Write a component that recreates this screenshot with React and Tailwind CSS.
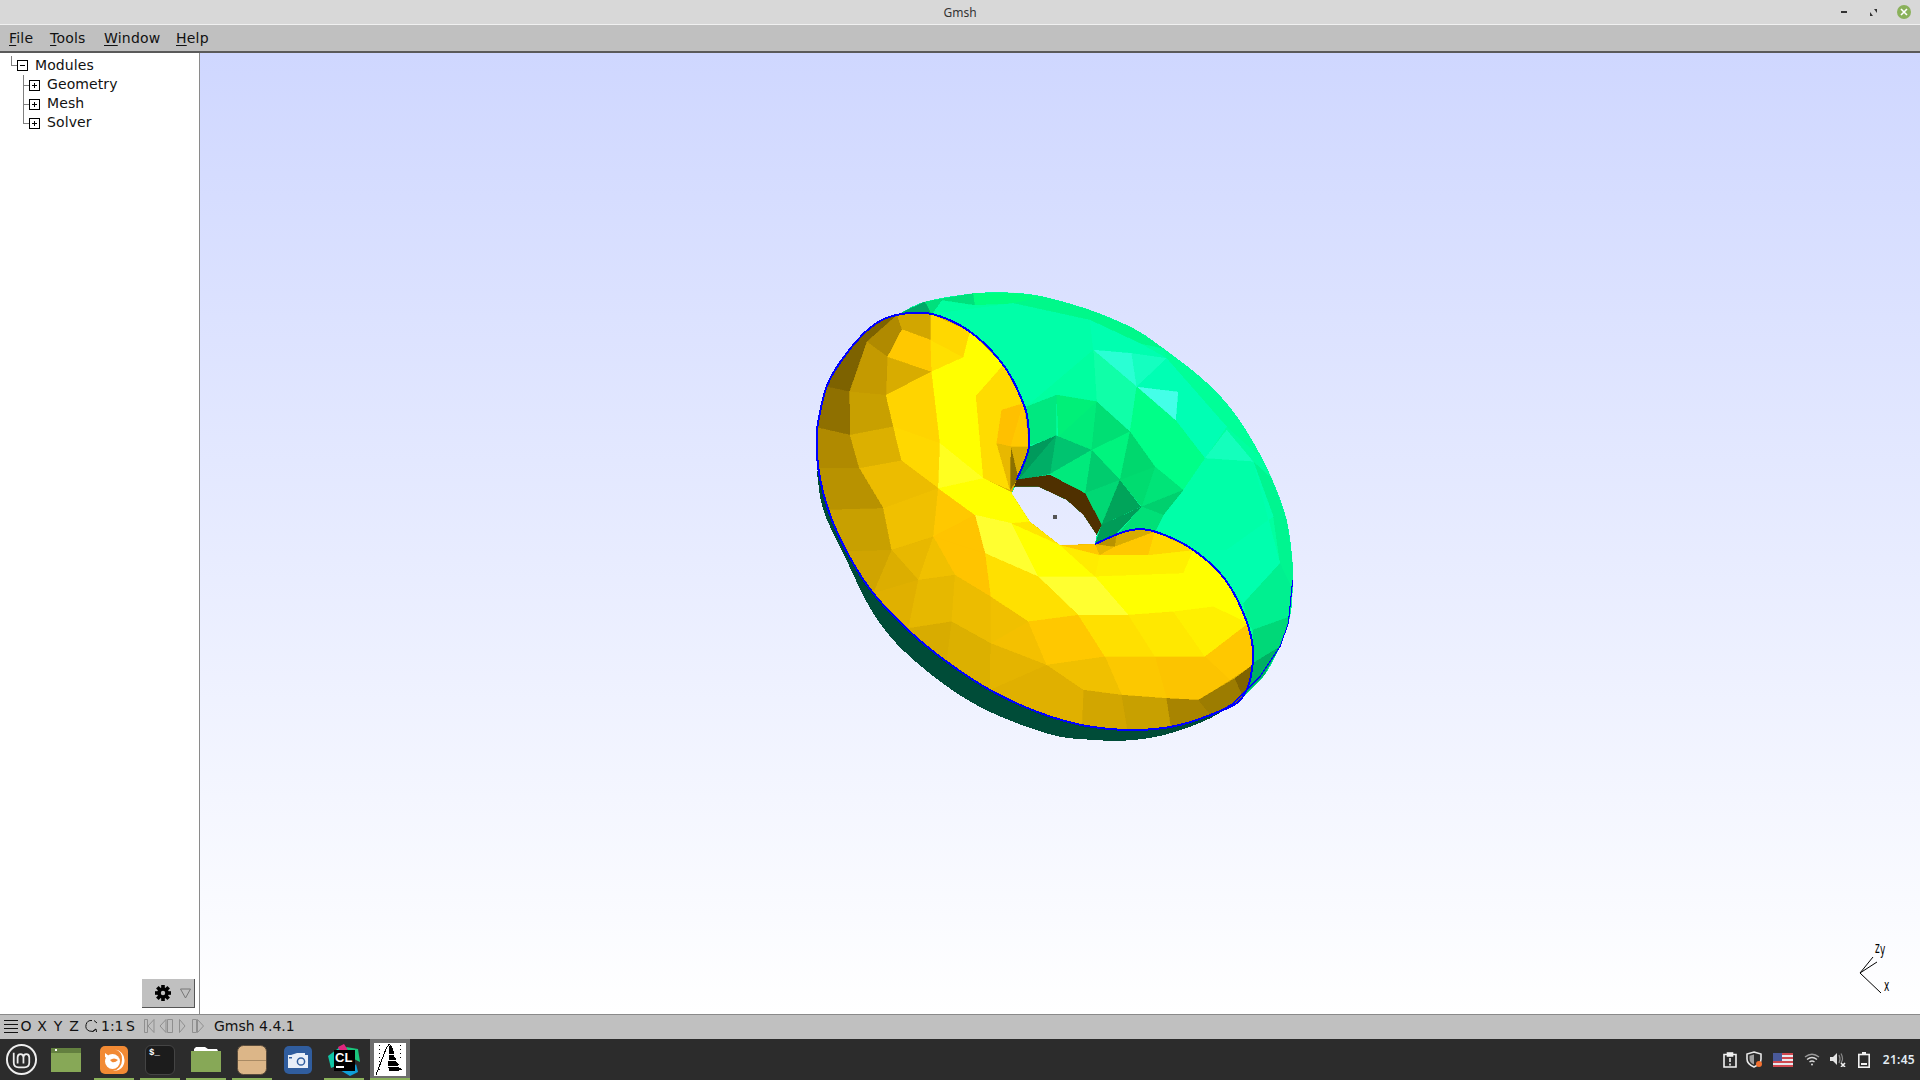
const greenFacets = [
  ['#00a868', '300,130 375,95 425,90 395,132'],
  ['#00e07c', '375,95 520,70 525,105 425,90 395,132'],
  ['#00ff80', '520,70 635,68 730,80 640,100 525,105'],
  ['#00f88a', '730,80 870,120 1000,175 1090,235 1020,220 870,150 640,100'],
  ['#00ff98', '1090,235 1200,320 1280,400 1350,500 1415,625 1380,560 1280,470 1100,265'],
  ['#00f590', '1415,625 1460,750 1478,880 1478,960 1440,880 1420,740 1360,575'],
  ['#00ffa8', '395,132 640,100 870,150 880,240 680,410 610,285 510,185'],
  ['#00ffb0', '870,150 1020,220 1100,265 995,250 880,240'],
  ['#2affd4', '880,240 995,250 1010,350'],
  ['#14ffc0', '995,250 1100,265 1010,350'],
  ['#44ffe8', '1010,350 1135,365 1128,452'],
  ['#00ffb4', '1100,265 1280,470 1215,565 1128,452 1135,365 1010,350'],
  ['#10ffa8', '880,240 1010,350 990,485 890,395'],
  ['#00ffa0', '680,410 880,240 890,395 770,375'],
  ['#00ff88', '1010,350 1128,452 1215,565 1150,660 1065,590 990,485'],
  ['#14ffbc', '1215,565 1280,480 1360,575'],
  ['#00ffa8', '1215,565 1360,575 1420,740 1280,840 1180,840 1065,785 1090,735 1150,660'],
  ['#00ffae', '1360,575 1440,880 1330,1000 1280,935 1180,840 1280,840 1420,740'],
  ['#00f090', '1440,880 1478,960 1470,1040 1358,1080 1345,1060 1330,1000'],
  ['#00d878', '1470,1040 1440,1130 1360,1180 1358,1080'],
  ['#00b064', '1440,1130 1390,1220 1325,1285 1358,1180'],
  ['#00e880', '680,410 770,375 768,497 692,525'],
  ['#00f078', '770,375 890,395 775,500'],
  ['#00ec7a', '890,395 875,540 775,500'],
  ['#00df74', '890,395 990,485 875,540'],
  ['#00f47e', '990,485 875,540 960,630'],
  ['#00d86e', '990,485 1065,590 960,630'],
  ['#00c470', '768,497 875,540 750,612'],
  ['#009a5c', '690,530 768,497 655,630'],
  ['#00ae66', '768,497 750,612 655,630'],
  ['#00cc6e', '875,540 960,630 855,670'],
  ['#00ea7c', '875,540 855,670 750,612'],
  ['#00d874', '960,630 855,670 905,765'],
  ['#00a45a', '960,630 1022,710 905,765'],
  ['#00e478', '1065,590 1150,660 1025,710'],
  ['#00dc70', '1065,590 1025,710 960,630'],
  ['#00d06e', '1150,660 1090,735 1025,710'],
  ['#00e078', '1025,710 1090,735 1065,785 960,785'],
  ['#009c58', '905,765 1025,710 950,790 885,822'],
  ['#4f3000', '645,630 750,615 855,670 905,765 890,795 850,735 800,690 715,650 640,650'],
]

const yellowFacets = [
  ['#d2a600', '290,135 395,132 392,210 305,178'],
  ['#ffc800', '305,178 392,210 395,305 262,260'],
  ['#b08a00', '290,135 305,178 262,260 200,215'],
  ['#c49a00', '200,215 262,260 258,375 148,365'],
  ['#7d6200', '200,215 148,365 80,350 120,240 215,150 290,135'],
  ['#c8a000', '148,365 258,375 280,470 150,495'],
  ['#8f7000', '80,350 148,365 150,495 40,470'],
  ['#b08a00', '40,470 150,495 178,595 45,595'],
  ['#dcb000', '150,495 280,470 305,572 178,595'],
  ['#ffd400', '258,375 395,305 420,520 280,470'],
  ['#ffe000', '395,305 392,210 490,262'],
  ['#ffd800', '392,132 510,185 490,262 392,210'],
  ['#ffff00', '510,185 610,285 528,378 490,262'],
  ['#ffff00', '395,305 490,262 528,378 550,625 420,520'],
  ['#ffd800', '280,470 420,520 415,655 305,572'],
  ['#ffff20', '420,520 550,625 415,655'],
  ['#ecbc00', '305,572 415,655 250,715 178,595'],
  ['#b89200', '45,595 178,595 250,715 75,720'],
  ['#c8a000', '75,720 250,715 275,840 130,845'],
  ['#f0c000', '250,715 415,655 400,800 275,840'],
  ['#ffc800', '415,655 525,735 400,800'],
  ['#ffdc00', '528,378 610,285 670,400 605,420 590,520 630,660 550,625'],
  ['#ffc000', '605,420 670,400 635,530 590,520'],
  ['#ffc800', '670,400 688,530 632,530'],
  ['#d8ac00', '632,530 688,530 655,630'],
  ['#8c7000', '632,530 655,625 630,660'],
  ['#e8b800', '590,520 632,530 630,660'],
  ['#ffff00', '550,625 640,670 690,755 635,760 525,735 415,655'],
  ['#ffff30', '525,735 635,760 555,850'],
  ['#ffc400', '525,735 555,850 400,800'],
  ['#ffff30', '635,760 715,920 555,850'],
  ['#ffff00', '635,760 780,825 885,920 715,920'],
  ['#ffe600', '690,755 780,825 635,760'],
  ['#ffec00', '780,825 900,855 885,920'],
  ['#ffc800', '780,825 885,822 900,855'],
  ['#e8b800', '885,822 945,830 900,855'],
  ['#b89200', '885,822 950,790 945,830'],
  ['#d8ac00', '950,790 1065,785 945,830'],
  ['#ffc800', '945,830 1065,785 1045,855 900,855'],
  ['#fff000', '900,855 1045,855 1180,840 1150,910 885,920'],
  ['#ffd800', '1065,785 1180,840 1045,855'],
  ['#ffff00', '885,920 1150,910 1240,1010 1120,1025 985,1035'],
  ['#ffff30', '715,920 885,920 985,1035 835,1035'],
  ['#ffff00', '1180,840 1290,925 1345,1060 1240,1010 1150,910'],
  ['#ffe000', '555,850 715,920 572,980'],
  ['#ffe000', '715,920 835,1035 685,1055 572,980'],
  ['#ffc400', '400,800 555,850 572,980 465,915'],
  ['#e8b800', '275,840 400,800 355,930'],
  ['#f0c000', '400,800 465,915 355,930'],
  ['#d0a400', '130,845 275,840 220,970'],
  ['#dcae00', '275,840 355,930 220,970'],
  ['#e0b000', '220,970 355,930 325,1075'],
  ['#e6b800', '355,930 465,915 455,1055 325,1075'],
  ['#ecbc00', '465,915 572,980 572,1120 455,1055'],
  ['#f0c000', '572,980 685,1055 572,1120'],
  ['#d8ac00', '325,1075 455,1055 440,1175'],
  ['#dcb000', '455,1055 572,1120 570,1260 440,1175'],
  ['#f4c000', '572,1120 685,1055 740,1185'],
  ['#e4b400', '572,1120 740,1185 570,1260'],
  ['#ffc800', '685,1055 835,1035 915,1160 740,1185'],
  ['#ffe000', '835,1035 985,1035 1065,1160 915,1160'],
  ['#ffe800', '985,1035 1120,1025 1215,1160 1065,1160'],
  ['#fff000', '1120,1025 1240,1010 1345,1060 1215,1160'],
  ['#ffc800', '1215,1160 1345,1060 1365,1180 1290,1230'],
  ['#fcc400', '1065,1160 1215,1160 1290,1230 1195,1290 1100,1285'],
  ['#fcc800', '915,1160 1065,1160 1100,1285 965,1275'],
  ['#f0c000', '740,1185 915,1160 965,1275 850,1260'],
  ['#e0b000', '570,1260 740,1185 850,1260 710,1325'],
  ['#d2a600', '850,1260 965,1275 985,1395 845,1380'],
  ['#c8a000', '965,1275 1100,1285 1115,1385 985,1395'],
  ['#a88400', '1100,1285 1195,1290 1240,1345 1115,1385'],
  ['#9c7c00', '1195,1290 1305,1225 1335,1295 1240,1345'],
  ['#806400', '1305,1225 1365,1180 1335,1295'],
  ['#e0b000', '710,1325 850,1260 845,1380 700,1340'],
]

// sample a catmull-rom curve through the traced points so the rim is not faceted
function smooth(str) {
  const pts = str.split(' ').map((pair) => pair.split(',').map(Number))
  const out = []
  for (let i = 0; i < pts.length - 1; i++) {
    const p0 = pts[Math.max(i - 1, 0)]
    const p1 = pts[i]
    const p2 = pts[i + 1]
    const p3 = pts[Math.min(i + 2, pts.length - 1)]
    for (let s = 0; s < 8; s++) {
      const t = s / 8
      const at = (k) => 0.5 * (2 * p1[k] + (p2[k] - p0[k]) * t + (2 * p0[k] - 5 * p1[k] + 4 * p2[k] - p3[k]) * t * t + (3 * p1[k] - p0[k] - 3 * p2[k] + p3[k]) * t * t * t)
      out.push(`${at(0).toFixed(1)},${at(1).toFixed(1)}`)
    }
  }
  out.push(pts[pts.length - 1].join(','))
  return out
}

const frontEdge = smooth('50,480 55,595 85,720 140,845 220,970 330,1085 440,1175 570,1260 710,1325 845,1365 985,1380 1115,1370 1230,1335 1325,1285 1358,1180 1345,1070 1280,935 1180,840 1065,785 985,782 885,822')
const backEdge = smooth('650,630 685,540 685,470 670,400 610,285 510,185 395,132 290,135 215,170 140,250 80,350 50,480')
const outerArc = smooth('300,130 375,95 520,70 635,68 730,80 870,120 1000,175 1090,235 1200,320 1280,400 1350,500 1415,625 1460,750 1478,880 1478,960 1470,1040 1440,1130 1390,1220 1325,1285')
const tealEdge = smooth('50,600 70,720 130,850 220,1030 330,1160 520,1300 740,1390 885,1410 1000,1410 1110,1390 1230,1345 1325,1285')
const hole = 'M635,670 L645,650 L715,650 L800,690 L850,735 L890,795 L885,822 L780,825 L690,755 Z'
const silhouette = `M${outerArc.join(' L')} L1100,1300 L500,1000 L290,135 Z`
const yellowPath = `M${frontEdge.join(' L')} L780,825 L690,755 L635,670 L${backEdge.join(' L')} Z`

function Torus() {
  return (
    <svg className="absolute left-[600px] top-[217px] h-[480px] w-[520px]" viewBox="0 0 1560 1440" shapeRendering="crispEdges">
      <defs>
        <clipPath id="green-clip"><path d={silhouette + hole} clipRule="evenodd" /></clipPath>
        <clipPath id="yellow-clip"><path d={yellowPath} /></clipPath>
      </defs>
      <polygon fill="#004c38" points={`${tealEdge.join(' ')} 1200,1200 400,900`} />
      <path d={silhouette + hole} fill="#00ffa0" fillRule="evenodd" />
      <g clipPath="url(#green-clip)">
        {greenFacets.map(([color, points]) => <polygon key={points} fill={color} stroke={color} strokeWidth="1" points={points} />)}
      </g>
      <path d={yellowPath} fill="#d8ac00" />
      <g clipPath="url(#yellow-clip)">
        {yellowFacets.map(([color, points]) => <polygon key={points} fill={color} stroke={color} strokeWidth="1" points={points} />)}
      </g>
      <polyline points={frontEdge.join(' ')} fill="none" stroke="#0000ff" strokeWidth="6" />
      <polyline points={backEdge.join(' ')} fill="none" stroke="#0000ff" strokeWidth="6" />
      <polyline points="1478,930 1465,1060 1440,1130 1380,1220 1300,1300 1230,1340" fill="none" stroke="#0000ff" strokeWidth="3" />
      <rect x="759" y="734" width="12" height="12" fill="#555555" />
    </svg>
  )
}

function Axes() {
  return (
    <svg className="absolute bottom-0 right-0 h-[90px] w-[70px] overflow-visible" viewBox="1850 924 70 90">
      <g stroke="#000" strokeWidth="1" fill="none">
        <path d="M1860,973 L1881,993" />
        <path d="M1860,973 L1877,962" />
        <path d="M1860,973 L1873,957" />
      </g>
      <g fontFamily="'DejaVu Sans', sans-serif" fontSize="12" fill="#000">
        <text transform="translate(1875,953) scale(0.75,1.36)">z</text>
        <text transform="translate(1880,955) scale(0.75,1.36)">y</text>
        <text transform="translate(1884,991) scale(0.75,1.36)">x</text>
      </g>
    </svg>
  )
}

function TreeRow({ label, last, root }) {
  return (
    <div className="flex h-[19px] items-center">
      <svg width={root ? 30 : 42} height="19" className="shrink-0" shapeRendering="crispEdges">
        {root ? (
          <>
            <path d="M11,0 V9 H17" stroke="#808080" fill="none" />
            <rect x="17.5" y="4.5" width="10" height="10" fill="#fff" stroke="#000" />
            <path d="M20,9.5 H25" stroke="#000" />
          </>
        ) : (
          <>
            <path d={last ? 'M23,0 V10 H30' : 'M23,0 V19 M23,10 H30'} stroke="#808080" fill="none" />
            <rect x="29.5" y="5.5" width="10" height="10" fill="#fff" stroke="#000" />
            <path d="M32,10.5 H37 M34.5,8 V13" stroke="#000" />
          </>
        )}
      </svg>
      <span className="ml-[5px] tracking-[0.1px]">{label}</span>
    </div>
  )
}

function MenuLabel({ first, rest, className }) {
  return <span className={className}><span className="underline underline-offset-2">{first}</span>{rest}</span>
}

function GearIcon() {
  const teeth = [0, 45, 90, 135]
  return (
    <svg width="16" height="16" viewBox="0 0 16 16">
      {teeth.map((angle) => <rect key={angle} x="6.2" y="0" width="3.6" height="16" fill="#000" transform={`rotate(${angle} 8 8)`} />)}
      <circle cx="8" cy="8" r="5.8" fill="#000" />
      <circle cx="8" cy="8" r="2.2" fill="#c0c0c0" />
    </svg>
  )
}

function PlayerIcons() {
  return (
    <svg width="60" height="16" viewBox="0 0 60 16" fill="none" stroke="#8f8f8f">
      <path d="M0.5,1.5 H3.5 V14.5 H0.5 Z M10,1.5 L4,8 L10,14.5 Z" />
      <path d="M22,1.5 L16,8 L22,14.5 Z M23.5,1.5 H28.5 V14.5 H23.5 Z" />
      <path d="M35.5,1.5 L41,8 L35.5,14.5 Z" />
      <path d="M48.5,1.5 H52.5 V14.5 H48.5 Z M53.5,1.5 L59.5,8 L53.5,14.5 Z" />
    </svg>
  )
}

function StatusBar() {
  return (
    <div className="flex h-[25px] items-center border-t border-[#8a8a8a] bg-[#c0c0c0] pb-[2px] text-[14px] text-[#111]">
      <svg width="14" height="14" className="ml-[4px]" shapeRendering="crispEdges">
        <path d="M0,1.5 H14 M0,5.5 H14 M0,9.5 H14 M0,13.5 H14" stroke="#111" />
      </svg>
      <span className="w-[16px] text-center">O</span>
      <span className="w-[16px] text-center">X</span>
      <span className="w-[16px] text-center">Y</span>
      <span className="w-[16px] text-center">Z</span>
      <svg width="14" height="14" viewBox="0 0 14 14" className="ml-[2px]" fill="none" stroke="#111">
        <path d="M8,1.5 A5.5,5.5 0 1 0 12,10" />
        <path d="M8.5,12.5 L12,10 L12.5,13" />
        <path d="M10,1.5 L13,4" />
      </svg>
      <span className="ml-[3px] w-[25px]">1:1</span>
      <span className="w-[18px]">S</span>
      <PlayerIcons />
      <span className="ml-[10px]">Gmsh 4.4.1</span>
    </div>
  )
}

function TaskIcon({ underline, active, children }) {
  return (
    <div className="relative flex h-full w-[46px] items-center justify-center">
      {active && <div className="absolute inset-y-0 left-[3px] right-[3px] bg-[#6e6e6e]" />}
      <div className="relative flex items-center justify-center">{children}</div>
      {underline && <div className="absolute bottom-0 left-[3px] right-[3px] h-[2px] bg-[#8ab15a]" />}
    </div>
  )
}

function TaskBar() {
  return (
    <div className="flex h-[41px] items-center bg-[#2c2c2c]">
      <div className="flex h-full w-[42px] items-center justify-center">
        <svg width="33" height="33" viewBox="0 0 34 34" fill="none" stroke="#eee">
          <circle cx="17" cy="17" r="15" strokeWidth="2" />
          <path d="M9,10 V20 Q9,25 14,25 H20 Q25,25 25,20 V15 Q25,11.5 22,11.5 Q19,11.5 19,15 V21 M19,15 Q19,11.5 16,11.5 Q13,11.5 13,15 V21" strokeWidth="1.8" />
        </svg>
      </div>
      <div className="flex h-full pl-[3px]">
        <TaskIcon>
          <svg width="30" height="24" viewBox="0 0 30 24" className="mr-[4px]">
            <rect width="30" height="24" fill="#87a857" />
            <rect width="30" height="5" fill="#63803f" />
            <rect x="4" y="1" width="2" height="2" fill="#fff" />
          </svg>
        </TaskIcon>
        <TaskIcon underline>
          <svg width="28" height="28" viewBox="0 0 28 28">
            <rect width="28" height="28" rx="5" fill="#f28a34" />
            <circle cx="12.5" cy="15.5" r="7.5" fill="#fff" />
            <path d="M15,3.5 A10.5,10.5 0 0 1 24.5,14 A10.5,10.5 0 0 1 13,25 A11,11 0 0 0 22,14 A9,9 0 0 0 15,3.5 Z" fill="#fff" />
            <path d="M5,7 L9,10 L17,11 Q20,13 18,15 Q14,17 10,15 L5,11 Z" fill="#fff" />
            <path d="M10,14 Q14,11 18,14 Q15,17 12,16 Z" fill="#f28a34" />
          </svg>
        </TaskIcon>
        <TaskIcon underline>
          <div className="flex h-[30px] w-[30px] items-start rounded-[6px] border border-[#444] bg-[#1c1c1c] pl-[3px] pt-[1px] font-['Liberation_Mono',monospace] text-[9px] font-bold leading-[12px] text-white">$_</div>
        </TaskIcon>
        <TaskIcon underline>
          <svg width="30" height="25" viewBox="0 0 30 25">
            <path d="M3,2 L5,0 H14 L17,2 H26 L27,4 H3 Z" fill="#fff" />
            <rect y="4" width="30" height="21" fill="#87a857" />
          </svg>
        </TaskIcon>
        <TaskIcon underline>
          <svg width="30" height="30" viewBox="0 0 30 30">
            <rect width="29" height="29" x="0.5" y="0.5" rx="6" fill="#dcb688" stroke="#5a4c3c" />
            <rect x="1" y="15" width="28" height="1" fill="#a88a64" />
          </svg>
        </TaskIcon>
        <TaskIcon>
          <svg width="28" height="28" viewBox="0 0 28 28">
            <rect width="28" height="28" rx="5" fill="#305d9e" />
            <path d="M7,9 H21 V7 H13 Z" fill="#e8eef8" />
            <rect x="4" y="9" width="20" height="13" fill="#e8eef8" />
            <circle cx="17" cy="15.5" r="3.6" fill="#e8eef8" stroke="#305d9e" strokeWidth="1.5" />
            <rect x="5" y="11" width="3" height="1.5" fill="#305d9e" />
          </svg>
        </TaskIcon>
        <TaskIcon underline>
          <div className="relative h-[32px] w-[32px]">
            <svg width="32" height="32" viewBox="0 0 32 32" className="absolute inset-0">
              <polygon points="0,12 12,3 18,8 8,22 3,24" fill="#10c5a5" />
              <polygon points="10,3 16,0 20,6 12,8" fill="#e0267e" />
              <polygon points="18,3 30,5 32,18 24,14" fill="#1ac67c" />
              <polygon points="5,22 24,26 28,20 30,28 22,32" fill="#0f9fd8" />
              <rect x="6" y="6" width="21" height="21" fill="#000" />
              <rect x="8" y="22" width="8" height="2" fill="#fff" />
            </svg>
            <span className="absolute left-[7px] top-[7px] font-['Liberation_Sans',sans-serif] text-[13px] font-bold leading-[14px] text-white">CL</span>
          </div>
        </TaskIcon>
        <TaskIcon underline active>
          <svg width="32" height="33" viewBox="0 0 32 33" shapeRendering="crispEdges">
            <rect width="32" height="33" fill="#fff" />
            <path d="M2,32 L12,6 L15,1 L18,4" fill="none" stroke="#000" strokeWidth="1" />
            <polygon points="15,3 18,3 20,10 19,11 22,16 21,17 25,22 23,23 29,27 20,28 15,28 14,21 15,14" fill="#000" />
            <path d="M15,11 H19 M14,17 H22 M14,23 H24" stroke="#fff" />
            <path d="M5,2 V30 M26,2 V16" stroke="#000" strokeDasharray="1 3" />
          </svg>
        </TaskIcon>
      </div>
      <div className="ml-auto flex h-full items-center pr-[5px]">
        <svg width="14" height="16" viewBox="0 0 14 16" fill="none" stroke="#f2f2f2" strokeWidth="1.6">
          <path d="M4,2.5 H1 V15 H13 V2.5 H10" />
          <rect x="4.5" y="1" width="5" height="3" fill="#f2f2f2" />
          <path d="M7,6 V10 M7,11.5 V13.5" />
        </svg>
        <svg width="18" height="17" viewBox="0 0 18 17" className="ml-[9px]" fill="none">
          <path d="M8,1 L15,3 V8 Q15,13 8,16 Q1,13 1,8 V3 Z" stroke="#e8e8e8" strokeWidth="1.6" />
          <path d="M8,3.5 V13.5 Q3.5,11.5 3.5,8 V4.8 Z" fill="#a0a0a0" />
          <circle cx="13" cy="13" r="3" fill="#f27030" />
        </svg>
        <svg width="20" height="14" viewBox="0 0 20 14" className="ml-[9px]" shapeRendering="crispEdges">
          <rect width="20" height="14" fill="#e8e8ee" />
          <path d="M0,1 H20 M0,5 H20 M0,9 H20 M0,13 H20" stroke="#d0484f" strokeWidth="1.2" />
          <rect width="9" height="7.5" fill="#4a5a9a" />
        </svg>
        <svg width="16" height="13" viewBox="0 0 16 13" className="ml-[11px]" fill="none" stroke="#d8d8d8" strokeWidth="1.4">
          <path d="M1,4 Q8,-1.5 15,4" stroke="#9a9a9a" />
          <path d="M3,6.5 Q8,2.5 13,6.5" />
          <path d="M5.5,9 Q8,7 10.5,9" />
          <circle cx="8" cy="11.5" r="1" fill="#d8d8d8" stroke="none" />
        </svg>
        <svg width="16" height="15" viewBox="0 0 16 15" className="ml-[10px]" fill="none">
          <path d="M0,5 H3 L7,1 V13 L3,9 H0 Z" fill="#e4e4e4" />
          <path d="M9,3 Q11,7 9,11 M11,1.5 Q14,7 11,11" stroke="#8a8a8a" strokeWidth="1.2" />
          <path d="M11,11 L15,15 M15,11 L11,15" stroke="#f0f0f0" strokeWidth="1.6" />
        </svg>
        <svg width="12" height="16" viewBox="0 0 12 16" className="ml-[12px]" fill="none">
          <rect x="0.8" y="2.5" width="10.4" height="12.7" stroke="#f2f2f2" strokeWidth="1.6" />
          <rect x="4" y="0" width="4" height="2" fill="#f2f2f2" />
          <rect x="3" y="11" width="6" height="2" fill="#f2f2f2" />
        </svg>
        <span className="ml-[13px] font-['Noto_Sans',sans-serif] text-[12px] font-semibold tracking-[0.3px] text-[#e4ecf4]">21:45</span>
      </div>
    </div>
  )
}

export default function App() {
  return (
    <div className="flex h-[1080px] w-[1920px] flex-col overflow-hidden bg-white font-['DejaVu_Sans',sans-serif] text-[14px] text-[#111]">
      <div className="relative flex h-[25px] items-center justify-center border-b border-[#f0f0f0] bg-[#d8d8d8] pt-[2px] text-[12px] text-[#333]">
        <span className="font-['Noto_Sans',sans-serif]">Gmsh</span>
        <div className="absolute right-[9px] top-[5px] flex items-center">
          <div className="h-[2px] w-[6px] bg-[#333]" />
          <svg width="7" height="7" viewBox="0 0 7 7" className="ml-[23px]">
            <path d="M0,7 V3 L3,7 Z M7,0 V4 L4,0 Z" fill="#333" />
          </svg>
          <div className="ml-[20px] flex h-[14px] w-[14px] items-center justify-center rounded-full bg-[#8ab15a]">
            <svg width="8" height="8" viewBox="0 0 8 8"><path d="M1,1 L7,7 M7,1 L1,7" stroke="#fff" strokeWidth="1.6" /></svg>
          </div>
        </div>
      </div>
      <div className="flex h-[28px] items-center border-b-2 border-[#5a5a5a] bg-[#c0c0c0] pl-[9px] text-[14px] tracking-[0.2px]">
        <MenuLabel first="F" rest="ile" className="w-[41px]" />
        <MenuLabel first="T" rest="ools" className="w-[54px]" />
        <MenuLabel first="W" rest="indow" className="w-[72px]" />
        <MenuLabel first="H" rest="elp" />
      </div>
      <div className="flex min-h-0 flex-1">
        <div className="flex w-[200px] shrink-0 flex-col justify-between border-r border-[#8a8a8a] bg-white pt-[3px]">
          <div>
            <TreeRow label="Modules" root />
            <TreeRow label="Geometry" />
            <TreeRow label="Mesh" />
            <TreeRow label="Solver" last />
          </div>
          <div className="mb-[6px] mr-[4px] flex h-[29px] w-[53px] items-center self-end border-b border-r border-[#555] bg-[#c0c0c0] pl-[13px]">
            <GearIcon />
            <svg width="11" height="11" viewBox="0 0 11 11" className="ml-[9px]" fill="none" stroke="#777">
              <path d="M0.5,1 H10.5 L5.5,10 Z" />
            </svg>
          </div>
        </div>
        <div className="relative flex-1 bg-gradient-to-b from-[#cfd7ff] to-[#ffffff]">
          <Torus />
          <Axes />
        </div>
      </div>
      <StatusBar />
      <TaskBar />
    </div>
  )
}
